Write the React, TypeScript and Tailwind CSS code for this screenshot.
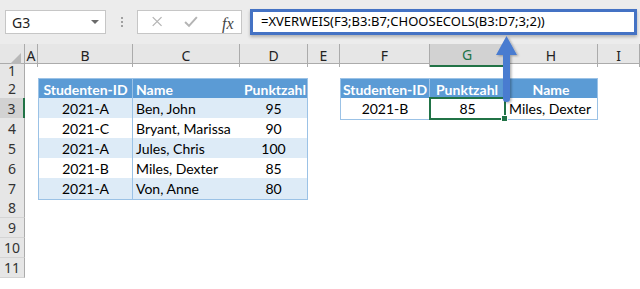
import React from "react";

const cols = "grid-cols-[25px_13px_95px_107px_68px_32px_90px_75px_93px_1fr]";
const letters = ["A", "B", "C", "D", "E", "F", "G", "H", "I"];
const heights = ["h-[14px]", "h-[20px]", "h-[20px]", "h-[20px]", "h-[20px]", "h-[20px]", "h-[20px]", "h-[20px]", "h-[20px]", "h-[20px]", "h-[20px]"];

const students = [
    {id: "2021-A", name: "Ben, John", score: "95"},
    {id: "2021-C", name: "Bryant, Marissa", score: "90"},
    {id: "2021-A", name: "Jules, Chris", score: "100"},
    {id: "2021-B", name: "Miles, Dexter", score: "85"},
    {id: "2021-A", name: "Von, Anne", score: "80"},
];

const cellFont = "font-['Lato',sans-serif] text-[14px] whitespace-nowrap";
const headCell = `flex items-center bg-[#5b9bd5] border-t border-[#9bc2e6] font-bold text-white ${cellFont}`;

function LeftTable({row}: {row: number}) {
    // rows 2..7 hold the table, columns B..D
    if (row < 2 || row > 7) {
        return (<><div /><div /><div /></>);
    }
    if (row === 2) {
        return (
            <>
                <div className={`${headCell} justify-center border-l border-r`}>Studenten-ID</div>
                <div className={`${headCell} pl-[3px]`}>Name</div>
                <div className={`${headCell} justify-end pr-[1px] border-r`}>Punktzahl</div>
            </>
        );
    }
    const s = students[row - 3];
    const bg = row % 2 === 1 ? "bg-[#ddebf7]" : "bg-white";
    return (
        <>
            <div className={`flex items-center justify-center ${bg} border-l border-r border-b border-[#9bc2e6] text-black ${cellFont}`}>{s.id}</div>
            <div className={`flex items-center pl-[3px] ${bg} border-b border-[#9bc2e6] text-black ${cellFont}`}>{s.name}</div>
            <div className={`flex items-center justify-center ${bg} border-r border-b border-[#9bc2e6] text-black ${cellFont}`}>{s.score}</div>
        </>
    );
}

function RightTable({row}: {row: number}) {
    if (row === 2) {
        return (
            <>
                <div className={`${headCell} justify-center border-l border-r`}>Studenten-ID</div>
                <div className={`${headCell} justify-center border-r`}>Punktzahl</div>
                <div className={`${headCell} justify-center border-r`}>Name</div>
            </>
        );
    }
    if (row === 3) {
        return (
            <>
                <div className={`flex items-center justify-center bg-white border-l border-r border-b border-[#9bc2e6] text-black ${cellFont}`}>2021-B</div>
                <div className={`relative flex items-center justify-center bg-white border-b border-[#9bc2e6] text-black ${cellFont}`}>
                    85
                    <div className="absolute -left-px -top-px -right-px -bottom-px border-2 border-[#217346]" />
                    <div className="absolute -right-[3px] -bottom-[3px] w-[5px] h-[5px] bg-[#217346] border border-white box-content" />
                </div>
                <div className={`flex items-center pl-[4px] bg-white border-b border-r border-[#9bc2e6] text-black ${cellFont}`}>Miles, Dexter</div>
            </>
        );
    }
    return (<><div /><div /><div /></>);
}

export default function App() {
    return (
        <div className="relative w-[640px] h-[289px] overflow-hidden bg-white font-['Noto_Sans',sans-serif]">
            {/* formula bar */}
            <div className="flex items-start h-[44px] bg-[#ececec] pl-[5px] pt-[10px]">
                <div className="flex items-center justify-between w-[101px] h-[24px] bg-white border border-[#c6c6c6] pl-[6px] pr-[6px]">
                    <span className="text-[14px] text-[#222]">G3</span>
                    <span className="w-0 h-0 border-l-[4px] border-r-[4px] border-t-[4px] border-l-transparent border-r-transparent border-t-[#6a6a6a]" />
                </div>
                <div className="flex flex-col items-center justify-center gap-[2px] w-[31px] h-[24px]">
                    <span className="w-[2px] h-[2px] bg-[#a0a0a0]" />
                    <span className="w-[2px] h-[2px] bg-[#a0a0a0]" />
                    <span className="w-[2px] h-[2px] bg-[#a0a0a0]" />
                </div>
                <div className="flex items-center w-[105px] h-[24px] bg-white border border-[#c6c6c6]">
                    <svg width="105" height="22" viewBox="0 0 105 22">
                        <path d="M15 6 L24 15 M24 6 L15 15" stroke="#b4b4b4" strokeWidth="1.3" fill="none" />
                        <path d="M48 11 L52 15 L60 6" stroke="#b4b4b4" strokeWidth="2" fill="none" />
                    </svg>
                    <span className="absolute left-[222px] top-[12px] font-['Liberation_Serif',serif] italic text-[16px] text-[#444]">fx</span>
                </div>
                <div className="ml-[8px] -mt-px flex items-center w-[387px] h-[26px] bg-white border-[3px] border-[#4472c4] shadow-[0_2px_3px_rgba(0,0,0,0.25)] pl-[8px]">
                    <span className="text-[13px] text-black whitespace-nowrap">=XVERWEIS(F3;B3:B7;CHOOSECOLS(B3:D7;3;2))</span>
                </div>
            </div>

            {/* column headers */}
            <div className={`grid ${cols} h-[20px] bg-[#e6e6e6] border-b border-[#ababab]`}>
                <div className="relative border-r border-[#ababab]">
                    <div className="absolute right-[3px] bottom-[3px] w-0 h-0 border-l-[11px] border-t-[11px] border-l-transparent border-t-transparent border-b-0 border-r-[11px] border-r-[#b8b8b8] border-b-[#b8b8b8]" />
                </div>
                {letters.map((l) => (
                    <div key={l} className={`flex items-center justify-center border-r border-[#ababab] text-[14px] ${l === "G" ? "bg-[#d2d2d2] text-[#217346] border-b-2 border-b-[#217346]" : "text-[#222]"}`}>{l}</div>
                ))}
            </div>

            {/* rows */}
            {heights.map((h, i) => {
                const row = i + 1;
                return (
                    <div key={row} className={`grid ${cols} ${h}`}>
                        <div className={`flex items-center justify-center border-b border-[#d4d4d4] text-[14px] leading-none text-[#333] ${row === 3 ? "bg-[#d2d2d2] border-r-2 border-r-[#217346]" : "bg-[#e6e6e6] border-r border-r-[#ababab]"}`}>{row}</div>
                        <div />
                        <LeftTable row={row} />
                        <div />
                        <RightTable row={row} />
                        <div />
                    </div>
                );
            })}

            {/* arrow pointing at the formula */}
            <svg className="absolute left-0 top-0" width="640" height="289" viewBox="0 0 640 289">
                <defs>
                    <filter id="sh" x="-50%" y="-50%" width="200%" height="200%">
                        <feDropShadow dx="1.5" dy="1" stdDeviation="1" floodColor="#000" floodOpacity="0.3" />
                    </filter>
                </defs>
                <g filter="url(#sh)" fill="#4a7bd0">
                    <path d="M506.5 36 L517 55 L510 55 L510 99 Q510 102 506.5 102 Q503 102 503 99 L503 55 L496 55 Z" />
                </g>
            </svg>
        </div>
    );
}
